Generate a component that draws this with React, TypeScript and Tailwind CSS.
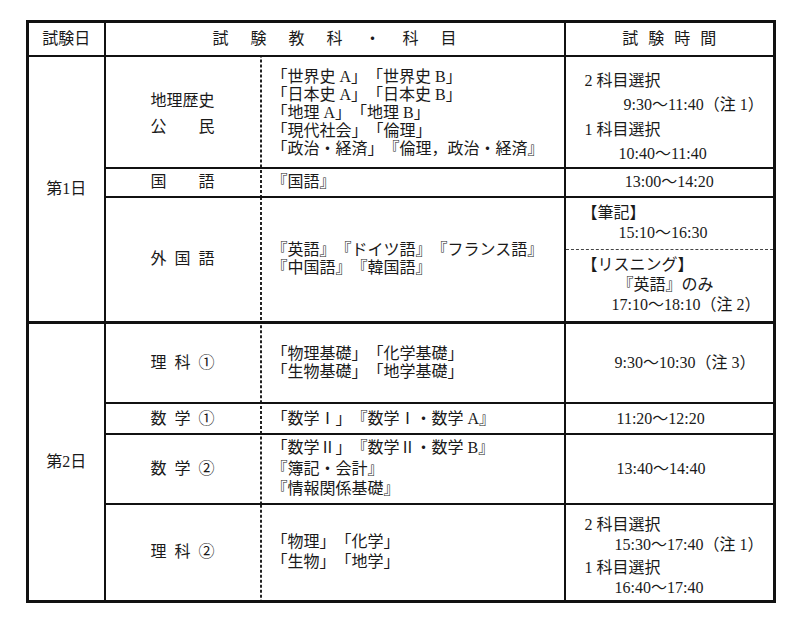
const dash =
  "pl-[12px] align-middle bg-[linear-gradient(to_bottom,#222_60%,transparent_60%)] bg-[length:1.5px_5px] bg-repeat-y bg-left";

function Spread({ text }: { text: string }) {
  return (
    <div className="mx-auto w-[64px] flex justify-between">
      {text.split('').map((c, i) => (
        <span key={i}>{c}</span>
      ))}
    </div>
  );
}

function Lines({ items, className }: { items: string[]; className: string }) {
  return (
    <div className={className}>
      {items.map((t, i) => (
        <div key={i} className="whitespace-nowrap">
          {t}
        </div>
      ))}
    </div>
  );
}

export default function App() {
  return (
    <div className="w-[800px] h-[617px] bg-white pl-[26px] pt-[20px] font-['Liberation_Serif','Noto_Sans_CJK_JP',serif] text-[16px] text-[#1a1a1a] [text-spacing-trim:space-all]">
      <table className="table-fixed border-collapse border-[3px] border-[#111] w-[747px]">
        <colgroup>
          <col className="w-[77px]" />
          <col className="w-[155px]" />
          <col className="w-[305px]" />
          <col className="w-[210px]" />
        </colgroup>
        <thead>
          <tr className="h-[34px] border-b-2 border-[#111]">
            <th className="font-normal border-r-2 border-[#111] text-center">試験日</th>
            <th colSpan={2} className="font-normal">
              <div className="flex justify-center gap-[22px]">
                {'試験教科・科目'.split('').map((c, i) => (
                  <span key={i}>{c}</span>
                ))}
              </div>
            </th>
            <th className="font-normal border-l-2 border-[#111]">
              <div className="flex justify-center gap-[10px]">
                {'試験時間'.split('').map((c, i) => (
                  <span key={i}>{c}</span>
                ))}
              </div>
            </th>
          </tr>
        </thead>
        <tbody>
          {/* 第1日 */}
          <tr className="h-[112px] border-t-2 border-[#111]">
            <td rowSpan={3} className="border-r-2 border-b-[3px] border-[#111] text-center align-middle">
              第1日
            </td>
            <td className="align-middle">
              <div className="leading-[26px] pt-[4px]">
                <Spread text="地理歴史" />
                <Spread text="公民" />
              </div>
            </td>
            <td className={dash}>
              <Lines
                className="leading-[18px] pt-[2px]"
                items={[
                  '「世界史 A」「世界史 B」',
                  '「日本史 A」「日本史 B」',
                  '「地理 A」「地理 B」',
                  '「現代社会」「倫理」',
                  '「政治・経済」『倫理，政治・経済』',
                ]}
              />
            </td>
            <td className="border-l-2 border-[#111] align-middle pl-[19px]">
              <div className="leading-[24.5px] pt-[12px] whitespace-nowrap">
                <div>2 科目選択</div>
                <div className="pl-[39px]">9:30～11:40（注 1）</div>
                <div>1 科目選択</div>
                <div className="pl-[34px]">10:40～11:40</div>
              </div>
            </td>
          </tr>
          <tr className="h-[29px] border-t-2 border-[#111]">
            <td className="align-middle">
              <Spread text="国語" />
            </td>
            <td className={dash}>『国語』</td>
            <td className="border-l-2 border-[#111] align-middle text-center">13:00～14:20</td>
          </tr>
          <tr className="h-[124px] border-t-2 border-b-[3px] border-[#111]">
            <td className="align-middle">
              <Spread text="外国語" />
            </td>
            <td className={dash}>
              <Lines
                className="leading-[18px]"
                items={['『英語』『ドイツ語』『フランス語』', '『中国語』『韓国語』']}
              />
            </td>
            <td className="border-l-2 border-[#111] p-0 align-top">
              <div className="h-[51px] flex flex-col justify-center pl-[16px] leading-[20px] whitespace-nowrap">
                <div>【筆記】</div>
                <div className="pl-[37px]">15:10～16:30</div>
              </div>
              <div className="h-[72px] flex flex-col justify-center pl-[16px] leading-[20px] whitespace-nowrap border-t border-dashed border-[#444]">
                <div>【リスニング】</div>
                <div className="pl-[36px]">『英語』のみ</div>
                <div className="pl-[30px]">17:10～18:10（注 2）</div>
              </div>
            </td>
          </tr>

          {/* 第2日 */}
          <tr className="h-[81px] border-t-[3px] border-[#111]">
            <td rowSpan={4} className="border-r-2 border-t-[3px] border-[#111] text-center align-middle">
              第2日
            </td>
            <td className="align-middle">
              <Spread text="理科①" />
            </td>
            <td className={dash}>
              <Lines className="leading-[17.5px]" items={['「物理基礎」「化学基礎」', '「生物基礎」「地学基礎」']} />
            </td>
            <td className="border-l-2 border-[#111] align-middle pl-[49px] whitespace-nowrap">9:30～10:30（注 3）</td>
          </tr>
          <tr className="h-[31px] border-t-2 border-[#111]">
            <td className="align-middle">
              <Spread text="数学①" />
            </td>
            <td className={dash}>「数学Ⅰ」『数学Ⅰ・数学 A』</td>
            <td className="border-l-2 border-[#111] align-middle pl-[51px]">11:20～12:20</td>
          </tr>
          <tr className="h-[70px] border-t-2 border-[#111]">
            <td className="align-middle">
              <Spread text="数学②" />
            </td>
            <td className={dash}>
              <Lines
                className="leading-[20.5px]"
                items={['「数学Ⅱ」『数学Ⅱ・数学 B』', '『簿記・会計』', '『情報関係基礎』']}
              />
            </td>
            <td className="border-l-2 border-[#111] align-middle pl-[51px]">13:40～14:40</td>
          </tr>
          <tr className="h-[97px] border-t-2 border-[#111]">
            <td className="align-middle">
              <Spread text="理科②" />
            </td>
            <td className={dash}>
              <Lines className="leading-[20px]" items={['「物理」「化学」', '「生物」「地学」']} />
            </td>
            <td className="border-l-2 border-[#111] align-middle pl-[19px]">
              <div className="leading-[20px] pt-[8px] whitespace-nowrap flex flex-col gap-[3px]">
                <div>
                  <div>2 科目選択</div>
                  <div className="pl-[30px]">15:30～17:40（注 1）</div>
                </div>
                <div>
                  <div>1 科目選択</div>
                  <div className="pl-[30px]">16:40～17:40</div>
                </div>
              </div>
            </td>
          </tr>
        </tbody>
      </table>
    </div>
  );
}
